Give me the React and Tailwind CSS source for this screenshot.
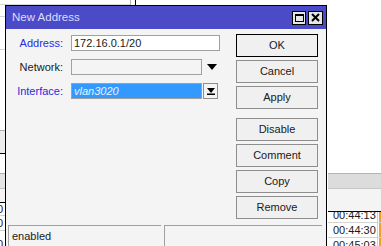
import React from 'react';

const font = { fontFamily: '"Liberation Sans", Arial, sans-serif' };

function Button({ children, primary }) {
  return (
    <div
      className={
        'flex h-[23px] w-[82px] items-center justify-center bg-[#f0f0f0] text-[11px] text-[#1a1a1a] ' +
        (primary ? 'border border-black' : 'border border-[#8e8e8e]')
      }
    >
      {children}
    </div>
  );
}

function Label({ children, blue }) {
  return (
    <div className={'w-[58px] pr-[1px] text-right text-[11px] ' + (blue ? 'text-[#2a2ae0]' : 'text-[#1a1a1a]')}>
      {children}
    </div>
  );
}

// window behind the dialog (table rows peeking out)
function Backdrop() {
  return (
    <>
      {/* left strip */}
      <div className="absolute left-0 top-[16px] h-px w-[6px] bg-[#d4d4d4]" />
      <div className="absolute left-0 top-[49px] h-px w-[6px] bg-[#d4d4d4]" />
      <div className="absolute left-0 top-[130px] h-[23px] w-[6px] border-t border-[#b0b0b0] bg-[#ececec]" />
      <div className="absolute left-0 top-[153px] h-px w-[6px] bg-black" />
      <div className="absolute left-0 top-[173px] h-[15px] w-[6px] border-t border-[#b0b0b0] bg-[#e4e4e4]" />
      <div className="absolute left-0 top-[188px] h-[14px] w-[6px] border-t border-[#c0c0c0] bg-[#f4f4f4]" />
      <div className="absolute left-0 top-[202px] h-px w-[6px] bg-black" />
      <div className="absolute left-[-3px] top-[203px] text-[11px] leading-[13px] text-[#1a1a1a]">0</div>
      <div className="absolute left-[-3px] top-[217px] text-[11px] leading-[13px] text-[#1a1a1a]">0</div>
      <div className="absolute left-[-3px] top-[238px] text-[11px] leading-[13px] text-[#1a1a1a]">0</div>
      <div className="absolute left-0 top-[215px] h-px w-[6px] bg-[#d0d0d0]" />
      <div className="absolute left-0 top-[230px] h-px w-[6px] bg-[#d0d0d0]" />
      {/* top */}
      <div className="absolute left-0 top-[4px] h-px w-[130px] bg-[#d8d8d8]" />
      <div className="absolute left-[130px] top-0 h-[5px] w-px bg-[#b0b0b0]" />
      <div className="absolute left-[135px] top-0 h-[5px] w-px bg-black" />
      {/* right side */}
      <div className="absolute left-[328px] top-[173px] h-[15px] w-[53px] border-t border-[#b4b4b4] bg-[#dcdcdc]" />
      <div className="absolute left-[328px] top-[188px] h-[23px] w-[53px] border-t border-[#c8c8c8] bg-[#f4f4f4]" />
      <div className="absolute left-[328px] top-[211px] h-px w-[53px] bg-black" />
      <div className="absolute left-[328px] top-[212px] flex w-[53px] flex-col text-[11px] text-[#1a1a1a]">
        {['00:44:13', '00:44:30', '00:45:03'].map((t, i) => (
          <div
            key={t}
            className={
              'flex items-center border-b border-[#d4d4d4] ' + (i === 0 ? 'h-[11px] items-end' : 'h-[15px]')
            }
          >
            <span className="ml-[5px] w-[44px] whitespace-nowrap leading-[13px]">{t}</span>
            <span className="h-full w-px bg-[#d0d0d0]" />
            <span className="ml-[1px] h-full w-[2px] bg-[#f0a030]" />
          </div>
        ))}
      </div>
    </>
  );
}

export default function App() {
  return (
    <div className="relative h-[246px] w-[381px] overflow-hidden bg-white" style={font}>
      <Backdrop />
      <div className="absolute left-[5px] top-[5px] flex h-[260px] w-[322px] flex-col border border-black bg-[#f4f4f4]">
        {/* title bar */}
        <div className="flex h-[23px] items-center bg-[#4b4bc8] pl-[6px] pr-[3px]">
          <span className="flex-1 text-[11.5px] text-[#dcdcff]">New Address</span>
          <div className="flex h-[14px] w-[14px] items-center justify-center border border-black bg-[#e6e6e6]">
            <div className="h-[8px] w-[9px] border border-black border-t-2" />
          </div>
          <div className="ml-[2px] flex h-[14px] w-[15px] items-center justify-center border border-black bg-[#e6e6e6]">
            <svg width="9" height="9" viewBox="0 0 9 9">
              <path d="M1 1 L8 8 M8 1 L1 8" stroke="black" strokeWidth="2" />
            </svg>
          </div>
        </div>

        {/* body */}
        <div className="flex flex-1 pt-[5px]">
          <div className="flex w-[230px] flex-col gap-[8px] pt-[1px]">
            <div className="flex h-[16px] items-center gap-[7px]">
              <Label blue>Address:</Label>
              <div className="flex h-[16px] w-[149px] items-center border border-[#a0a0a0] bg-white pl-[2px] text-[11px] text-[#1a1a1a]">
                172.16.0.1/20
              </div>
            </div>
            <div className="flex h-[16px] items-center gap-[7px]">
              <Label>Network:</Label>
              <div className="h-[16px] w-[131px] border border-[#a0a0a0] bg-[#f4f4f4]" />
              <svg width="10" height="6" viewBox="0 0 10 6" className="ml-[-2px]">
                <path d="M0 0 H10 L5 6 Z" fill="black" />
              </svg>
            </div>
            <div className="flex h-[16px] items-center gap-[7px]">
              <Label blue>Interface:</Label>
              <div className="flex h-[16px] w-[131px] items-center border border-[#a0a0a0] bg-[#3399ff] pl-[2px] text-[11px] italic text-[#e8f2ff]">
                vlan3020
              </div>
              <div className="ml-[-6px] flex h-[16px] w-[15px] items-center justify-center border border-[#8e8e8e] bg-[#f4f4f4]">
                <svg width="8" height="8" viewBox="0 0 8 8">
                  <path d="M0 1 H8 L4 6 Z" fill="black" />
                  <rect x="0" y="6.5" width="8" height="1.5" fill="black" />
                </svg>
              </div>
            </div>
          </div>

          <div className="flex flex-col">
            <div className="flex flex-col gap-[3px]">
              <Button primary>OK</Button>
              <Button>Cancel</Button>
              <Button>Apply</Button>
            </div>
            <div className="mt-[9px] flex flex-col gap-[3px]">
              <Button>Disable</Button>
              <Button>Comment</Button>
              <Button>Copy</Button>
              <Button>Remove</Button>
            </div>
          </div>
        </div>

        {/* status bar */}
        <div className="absolute left-0 top-[219px] flex w-full gap-[3px] pl-[2px] pr-[4px]">
          <div className="h-[30px] w-[153px] border-l border-t border-[#a0a0a0] pl-[3px] pt-[2px] text-[11px] text-[#1a1a1a]">
            enabled
          </div>
          <div className="h-[30px] flex-1 border-l border-t border-[#a0a0a0]" />
        </div>
      </div>
    </div>
  );
}
